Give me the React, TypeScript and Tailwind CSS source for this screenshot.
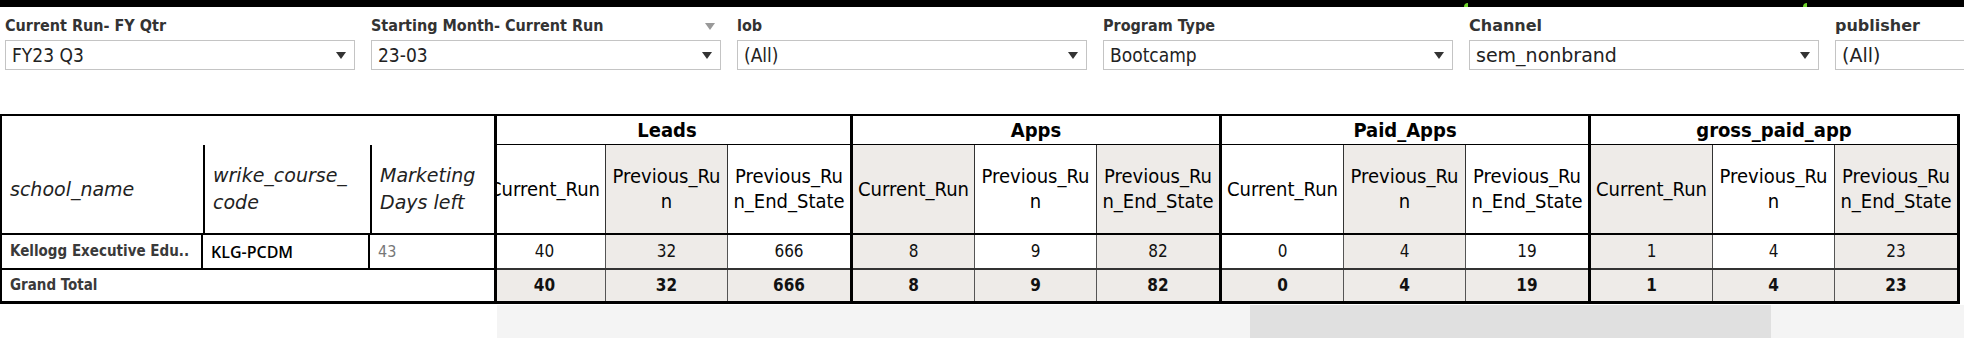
import React from 'react'

const COND = "font-['DejaVu_Sans_Condensed','DejaVu_Sans',sans-serif]"
const SANS = "font-['DejaVu_Sans',sans-serif]"

type FilterDef = { label: string; value: string; cond?: boolean; menu?: boolean }

const filters: FilterDef[] = [
  { label: 'Current Run- FY Qtr', value: 'FY23 Q3', cond: true },
  { label: 'Starting Month- Current Run', value: '23-03', cond: true, menu: true },
  { label: 'lob', value: '(All)', cond: true },
  { label: 'Program Type', value: 'Bootcamp', cond: true },
  { label: 'Channel', value: 'sem_nonbrand' },
  { label: 'publisher', value: '(All)' },
]

const sections = [
  { name: 'Leads', row: [40, 32, 666] },
  { name: 'Apps', row: [8, 9, 82] },
  { name: 'Paid_Apps', row: [0, 4, 19] },
  { name: 'gross_paid_app', row: [1, 4, 23] },
]

const colHeads: string[][] = [['Current_Run'], ['Previous_Ru', 'n'], ['Previous_Ru', 'n_End_State']]

function Arrow({ color = '#333' }: { color?: string }): JSX.Element {
  return (
    <svg width="10" height="7" viewBox="0 0 10 7" className="shrink-0">
      <path d="M0 0H10L5 7Z" fill={color} />
    </svg>
  )
}

function Filter({ f }: { f: FilterDef }): JSX.Element {
  const font = f.cond ? COND : SANS
  return (
    <div className="w-[350px] shrink-0">
      <div className="flex items-center justify-between h-[18px] pr-[6px]">
        <span className={`text-[16px] font-bold text-[#333] leading-[18px] whitespace-nowrap ${font}`}>{f.label}</span>
        {f.menu && <Arrow color="#999" />}
      </div>
      <div className="mt-[5px] h-[30px] border border-[#c4c4c4] bg-white flex items-center justify-between pl-[6px] pr-[8px]">
        <span className={`text-[19px] text-[#222] whitespace-nowrap ${font}`}>{f.value}</span>
        <Arrow />
      </div>
    </div>
  )
}

export default function App(): JSX.Element {
  return (
    <div className="w-[1964px] h-[358px] bg-white overflow-hidden">
      {/* top bar */}
      <div className="relative h-[7px] bg-black">
        <span className="absolute left-[1464px] top-[3px] w-[4px] h-[4px] rounded-tl-full bg-[#6ed42a]" />
        <span className="absolute left-[1803px] top-[3px] w-[4px] h-[4px] rounded-tl-full bg-[#6ed42a]" />
      </div>

      {/* filters */}
      <div className="flex gap-[16px] pl-[5px] pt-[10px] overflow-hidden">
        {filters.map((f) => (
          <Filter key={f.label} f={f} />
        ))}
      </div>

      {/* crosstab */}
      <div className="flex mt-[44px]">
        {/* frozen row headers */}
        <div className={`w-[497px] shrink-0 ${COND}`}>
          <div className="border-l-2 border-r-[3px] border-black">
            <div className="h-[31px] border-t-2 border-black" />
            <div className={`h-[88px] grid grid-cols-[203px_167px_1fr] italic text-[19px] leading-[27px] text-[#222] ${SANS}`}>
              <div className="flex items-center pl-[8px] border-r-2 border-black">school_name</div>
              <div className="flex items-center pl-[8px] border-r-2 border-black">wrike_course_<br />code</div>
              <div className="flex items-center pl-[8px]">Marketing<br />Days left</div>
            </div>
            <div className="h-[35px] border-t-2 border-black grid grid-cols-[201px_167px_1fr] text-[15px]">
              <div className="flex items-center pl-[8px] border-r-2 border-black font-bold text-[#3a3a3a] whitespace-nowrap">Kellogg Executive Edu..</div>
              <div className="flex items-center pl-[8px] border-r-2 border-black font-['Open_Sans',sans-serif] font-semibold text-[16px] text-black">KLG-PCDM</div>
              <div className="flex items-center pl-[8px] text-[#777] text-[16px]">43</div>
            </div>
            <div className="h-[36px] border-t-2 border-b-[3px] border-black flex items-center pl-[8px] text-[15px] font-bold text-[#3a3a3a]">
              Grand Total
            </div>
          </div>
        </div>

        {/* scrolled measures */}
        <div className="flex-1 min-w-0 flex flex-col">
          <div className="overflow-hidden">
            <div className={`flex w-max ml-[-13px] ${COND}`}>
              {sections.map((s, si) => (
                <div key={s.name} className="w-[369px] shrink-0 border-r-[3px] border-black">
                  <div className="h-[31px] border-t-2 border-b border-black flex items-center justify-center text-[20px] font-bold text-black">
                    {s.name}
                  </div>
                  <div className="h-[88px] grid grid-cols-3 text-[20px] leading-[25px] text-black">
                    {colHeads.map((lines, ci) => (
                      <div
                        key={ci}
                        className={`flex items-center justify-center text-center whitespace-nowrap overflow-hidden ${
                          (si * 3 + ci) % 2 === 1 ? 'bg-[#eeebe8]' : 'bg-white'
                        } ${ci < 2 ? 'border-r border-[#333]' : ''}`}
                      >
                        <div>
                          {lines.map((l) => (
                            <div key={l}>{l}</div>
                          ))}
                        </div>
                      </div>
                    ))}
                  </div>
                  <div className="h-[35px] border-t-2 border-black grid grid-cols-3 text-[17px] text-[#111]">
                    {s.row.map((v, ci) => (
                      <div
                        key={ci}
                        className={`flex items-center justify-center ${
                          (si * 3 + ci) % 2 === 1 ? 'bg-[#eeebe8]' : 'bg-white'
                        } ${ci < 2 ? 'border-r border-[#555]' : ''}`}
                      >
                        {v}
                      </div>
                    ))}
                  </div>
                  <div className="h-[36px] border-t-2 border-t-[#333] border-b-[3px] border-b-black grid grid-cols-3 bg-[#eeebe8] text-[17px] font-bold text-[#111]">
                    {s.row.map((v, ci) => (
                      <div key={ci} className={`flex items-center justify-center ${ci < 2 ? 'border-r border-[#555]' : ''}`}>
                        {v}
                      </div>
                    ))}
                  </div>
                </div>
              ))}
            </div>
          </div>
          {/* horizontal scrollbar */}
          <div className="h-[33px] mt-[1px] bg-[#f4f4f4]">
            <div className="ml-[753px] w-[521px] h-full bg-[#e0e0e0]" />
          </div>
        </div>
      </div>
    </div>
  )
}
